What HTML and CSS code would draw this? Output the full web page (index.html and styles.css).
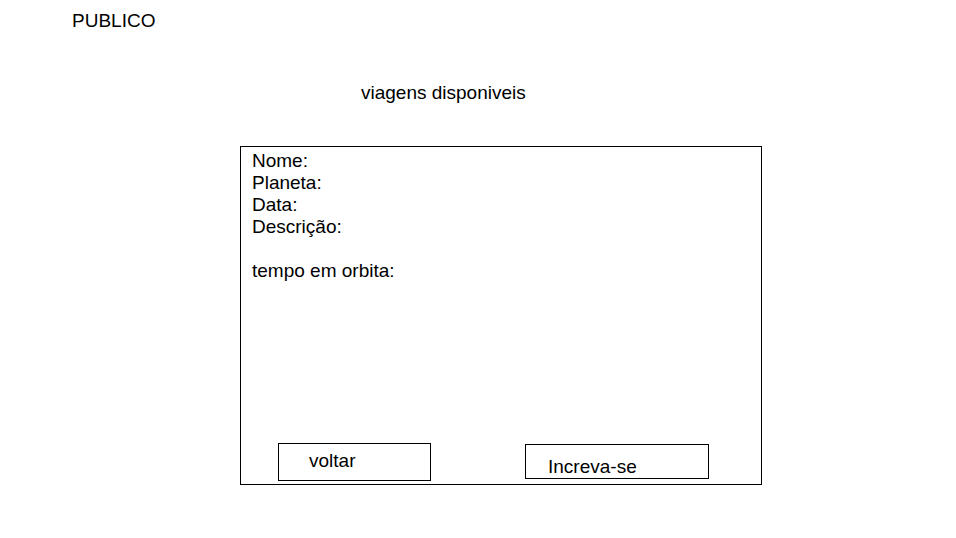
FILE: index.html
```html
<!DOCTYPE html>
<html lang="pt">
<head>
<meta charset="utf-8">
<title>PUBLICO</title>
<link rel="stylesheet" href="styles.css">
</head>
<body>
<div class="brand">PUBLICO</div>
<h1 class="title">viagens disponiveis</h1>
<section class="card">
  <div class="fields">
    <div>Nome:</div>
    <div>Planeta:</div>
    <div>Data:</div>
    <div>Descrição:</div>
    <div class="gap">tempo em orbita:</div>
  </div>
  <div class="actions">
    <button class="btn btn-back">voltar</button>
    <button class="btn btn-join">Increva-se</button>
  </div>
</section>
</body>
</html>
```
FILE: styles.css
```css
html, body {
  margin: 0;
  padding: 0;
  background: #fff;
}
body {
  font-family: "Liberation Sans", Arial, sans-serif;
  font-size: 19px;
  line-height: 22px;
  color: #000;
}
.brand {
  padding: 10px 0 0 72px;
  height: 22px;
}
.title {
  margin: 50px 0 0 0;
  padding-left: 361px;
  font-size: 19px;
  font-weight: normal;
  line-height: 22px;
}
.card {
  box-sizing: border-box;
  margin: 42px 0 0 240px;
  width: 522px;
  height: 339px;
  border: 1px solid #000;
  display: flex;
  flex-direction: column;
  padding: 3px 0 3px 11px;
}
.fields .gap {
  margin-top: 22px;
}
.actions {
  margin-top: auto;
  display: flex;
  align-items: flex-start;
  padding-left: 26px;
}
.btn {
  box-sizing: border-box;
  font: inherit;
  color: #000;
  background: #fff;
  border: 1px solid #000;
  border-radius: 0;
  text-align: left;
  margin: 0;
  cursor: pointer;
}
.btn-back {
  width: 153px;
  height: 38px;
  padding: 1px 0 3px 30px;
  align-self: flex-start;
}
.btn-join {
  width: 184px;
  height: 35px;
  margin: 1px 0 0 94px;
  padding: 11px 0 0 22px;
}
```
